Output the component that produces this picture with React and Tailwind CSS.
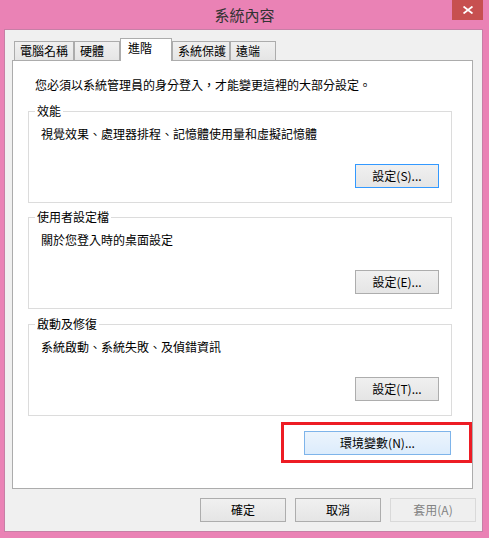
import React from 'react';

const FONT = { fontFamily: '"Noto Sans CJK TC", "Noto Sans", sans-serif' };

function Tab({ label, width, selected }) {
  if (selected) {
    return (
      <div
        className="relative z-10 -mb-[1px] h-[23px] border border-b-0 border-[#acacac] bg-white pl-[7px] pt-[1px] text-[12px] leading-[16px] text-black"
        style={{ width }}
      >
        {label}
      </div>
    );
  }
  return (
    <div
      className="flex h-[19px] items-center border border-b-0 border-[#acacac] bg-linear-to-b from-[#f0f0f0] to-[#e5e5e5] pl-[5px] text-[12px] leading-[16px] text-black"
      style={{ width }}
    >
      {label}
    </div>
  );
}

function Btn({ children, className = '', variant = 'normal' }) {
  const look = {
    normal: 'border-[#adadad] bg-linear-to-b from-[#f0f0f0] to-[#e5e5e5] text-black',
    focus: 'border-[#3399ff] bg-linear-to-b from-[#f0f0f0] to-[#e5e5e5] text-black',
    hover: 'border-[#7eb4ea] bg-linear-to-b from-[#ecf4fc] to-[#dcecfc] text-black',
    disabled: 'border-[#d9d9d9] bg-[#efefef] text-[#838383]',
  }[variant];
  return (
    <div
      className={`flex h-[24px] items-center justify-center border text-[12px] leading-[16px] ${look} ${className}`}
    >
      {children}
    </div>
  );
}

function Group({ legend, text, button, className = '' }) {
  return (
    <div className={`ml-[15px] flex h-[92px] w-[424px] flex-col border border-[#dcdcdc] ${className}`}>
      <span className="-mt-[9px] ml-[6px] w-fit bg-white px-[2px] text-[12px] leading-[16px] text-black">
        {legend}
      </span>
      <div className="mt-[7px] pl-[12px] text-[12px] leading-[16px] text-black">{text}</div>
      <Btn className="mt-auto mb-[14px] mr-[12px] w-[84px] self-end" variant={button.variant}>
        {button.label}
      </Btn>
    </div>
  );
}

export default function App() {
  return (
    <div className="h-[538px] w-[489px] overflow-hidden bg-[#ea82b5]" style={FONT}>
      {/* title bar */}
      <div className="relative flex h-[29px] items-center justify-center">
        <span className="text-[15px] leading-[20px] text-[#333333]">系統內容</span>
        <div className="absolute right-[6px] top-0 flex h-[20px] w-[31px] items-center justify-center bg-[#c75050]">
          <svg width="10" height="8" viewBox="0 0 10 8">
            <path d="M0.5 0.5 L9.5 7.5 M9.5 0.5 L0.5 7.5" stroke="white" strokeWidth="1.8" />
          </svg>
        </div>
      </div>

      {/* client area */}
      <div className="ml-[4px] h-[503px] w-[479px] border border-[#c77fa6] bg-[#f0f0f0] pl-[7px] pt-[8px]">
        <div className="ml-[2px] flex h-[22px] items-end">
          <Tab label="電腦名稱" width={60} />
          <Tab label="硬體" width={46} />
          <Tab label="進階" width={52} selected />
          <Tab label="系統保護" width={58} />
          <Tab label="遠端" width={46} />
        </div>

        <div className="relative flex h-[429px] w-[461px] flex-col border border-[#acacac] bg-white">
          <div className="pl-[22px] pt-[16px] text-[12px] leading-[16px] text-black">
            您必須以系統管理員的身分登入，才能變更這裡的大部分設定。
          </div>

          <Group
            className="mt-[18px]"
            legend="效能"
            text="視覺效果、處理器排程、記憶體使用量和虛擬記憶體"
            button={{ label: '設定(S)...', variant: 'focus' }}
          />
          <Group
            className="mt-[14px]"
            legend="使用者設定檔"
            text="關於您登入時的桌面設定"
            button={{ label: '設定(E)...', variant: 'normal' }}
          />
          <Group
            className="mt-[15px]"
            legend="啟動及修復"
            text="系統啟動、系統失敗、及偵錯資訊"
            button={{ label: '設定(T)...', variant: 'normal' }}
          />

          <Btn className="mt-[15px] mr-[21px] w-[147px] self-end" variant="hover">
            環境變數(N)...
          </Btn>

          {/* highlight */}
          <div className="absolute left-[268px] top-[361px] h-[41px] w-[191px] border-[3px] border-[#ed1c24]" />
        </div>

        <div className="mt-[9px] flex justify-end gap-[9px] pr-[6px]">
          <Btn className="w-[86px]">確定</Btn>
          <Btn className="w-[86px]">取消</Btn>
          <Btn className="w-[86px]" variant="disabled">
            套用(A)
          </Btn>
        </div>
      </div>
    </div>
  );
}
